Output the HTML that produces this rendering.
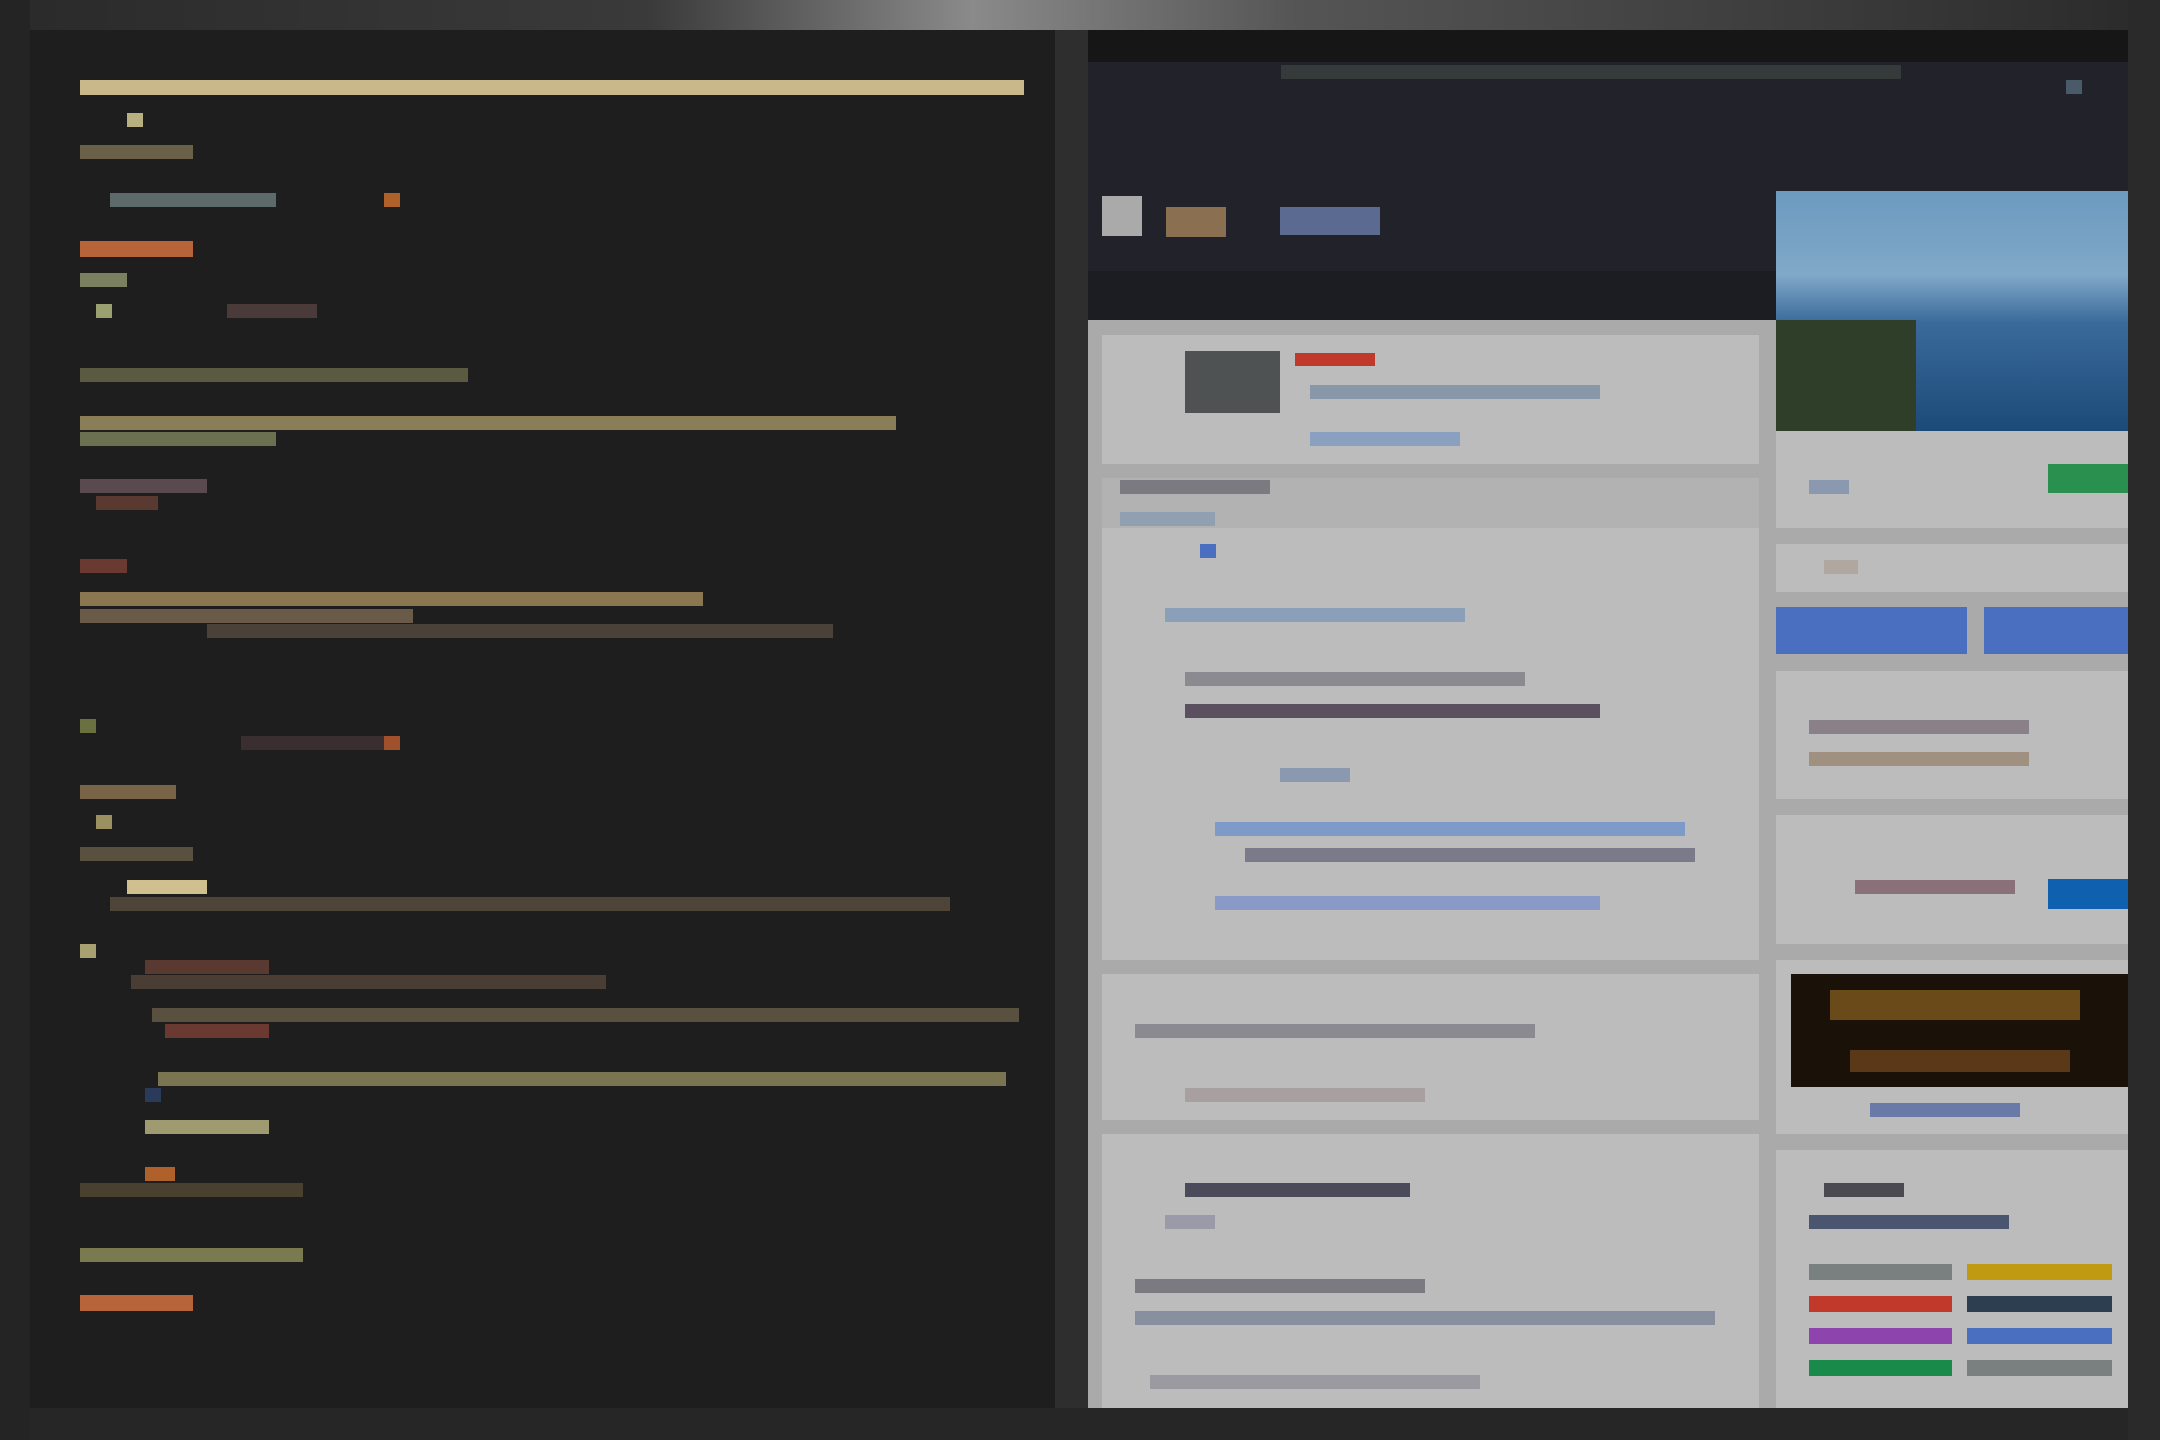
<!DOCTYPE html>
<html><head><meta charset="utf-8"><style>
html,body{margin:0;padding:0;width:2160px;height:1440px;overflow:hidden;background:#161616;font-family:"Liberation Sans",sans-serif}
.b{position:absolute}
</style></head><body>
<!-- noisy outer border -->
<div class="b" style="left:0;top:0;width:2160px;height:30px;background:linear-gradient(90deg,#2a2a2a,#3a3a3a 30%,#8a8a8a 45%,#555 60%,#2a2a2a)"></div>
<div class="b" style="left:0;top:1408px;width:2160px;height:32px;background:#262626"></div>
<div class="b" style="left:0;top:0;width:30px;height:1440px;background:#242424"></div>
<div class="b" style="left:2128px;top:0;width:32px;height:1440px;background:#2a2a2a"></div>
<div class="b" style="left:1055px;top:30px;width:33px;height:1378px;background:#2e2e2e"></div>

<!-- left editor panel -->
<div class="b" style="left:30px;top:30px;width:1025px;height:1378px;background:#1e1e1e"></div>
<div class="b" style="left:80px;top:80px;width:944px;height:15px;background:#c8b88a"></div>
<div class="b" style="left:127px;top:113px;width:16px;height:14px;background:#b8b080"></div>
<div class="b" style="left:80px;top:145px;width:113px;height:14px;background:#6a6048"></div>
<div class="b" style="left:110px;top:193px;width:166px;height:14px;background:#5d6a6a"></div>
<div class="b" style="left:384px;top:193px;width:16px;height:14px;background:#b0602a"></div>
<div class="b" style="left:80px;top:241px;width:113px;height:16px;background:#b8643a"></div>
<div class="b" style="left:80px;top:273px;width:47px;height:14px;background:#7a8060"></div>
<div class="b" style="left:96px;top:304px;width:16px;height:14px;background:#9aa070"></div>
<div class="b" style="left:227px;top:304px;width:90px;height:14px;background:#4a3a3a"></div>
<div class="b" style="left:80px;top:368px;width:388px;height:14px;background:#5a5a40"></div>
<div class="b" style="left:80px;top:416px;width:816px;height:14px;background:#8a7e58"></div>
<div class="b" style="left:80px;top:432px;width:196px;height:14px;background:#6a7050"></div>
<div class="b" style="left:80px;top:479px;width:127px;height:14px;background:#5a4a50"></div>
<div class="b" style="left:96px;top:496px;width:62px;height:14px;background:#5a3a30"></div>
<div class="b" style="left:80px;top:559px;width:47px;height:14px;background:#6a3a30"></div>
<div class="b" style="left:80px;top:592px;width:623px;height:14px;background:#8a7650"></div>
<div class="b" style="left:80px;top:609px;width:333px;height:14px;background:#6a5a48"></div>
<div class="b" style="left:207px;top:624px;width:626px;height:14px;background:#4a4238"></div>
<div class="b" style="left:80px;top:719px;width:16px;height:14px;background:#6a7040"></div>
<div class="b" style="left:241px;top:736px;width:159px;height:14px;background:#3a2e2e"></div>
<div class="b" style="left:384px;top:736px;width:16px;height:14px;background:#a0502a"></div>
<div class="b" style="left:80px;top:785px;width:96px;height:14px;background:#7a6448"></div>
<div class="b" style="left:96px;top:815px;width:16px;height:14px;background:#9a9060"></div>
<div class="b" style="left:80px;top:847px;width:113px;height:14px;background:#5a5040"></div>
<div class="b" style="left:127px;top:880px;width:80px;height:14px;background:#d0c090"></div>
<div class="b" style="left:110px;top:897px;width:840px;height:14px;background:#4e4438"></div>
<div class="b" style="left:80px;top:944px;width:16px;height:14px;background:#a8a070"></div>
<div class="b" style="left:145px;top:960px;width:124px;height:14px;background:#5a3a30"></div>
<div class="b" style="left:131px;top:975px;width:475px;height:14px;background:#4a3e34"></div>
<div class="b" style="left:152px;top:1008px;width:867px;height:14px;background:#5a5040"></div>
<div class="b" style="left:165px;top:1024px;width:104px;height:14px;background:#6a3a30"></div>
<div class="b" style="left:158px;top:1072px;width:848px;height:14px;background:#7a7450"></div>
<div class="b" style="left:145px;top:1088px;width:16px;height:14px;background:#2a3a5a"></div>
<div class="b" style="left:145px;top:1120px;width:124px;height:14px;background:#a09a70"></div>
<div class="b" style="left:145px;top:1167px;width:30px;height:14px;background:#b0602a"></div>
<div class="b" style="left:80px;top:1183px;width:223px;height:14px;background:#4a4030"></div>
<div class="b" style="left:80px;top:1248px;width:223px;height:14px;background:#7a7a50"></div>
<div class="b" style="left:80px;top:1295px;width:113px;height:16px;background:#b8643a"></div>

<!-- right browser panel -->
<div class="b" style="left:1088px;top:30px;width:1040px;height:32px;background:#161616"></div>
<div class="b" style="left:1088px;top:62px;width:1040px;height:209px;background:#22232a"></div>
<div class="b" style="left:1281px;top:65px;width:620px;height:14px;background:#353a3a"></div>
<div class="b" style="left:2066px;top:80px;width:16px;height:14px;background:#4a5a6a"></div>
<div class="b" style="left:1102px;top:196px;width:40px;height:40px;background:#aaaaaa"></div>
<div class="b" style="left:1166px;top:207px;width:60px;height:30px;background:#8a7050"></div>
<div class="b" style="left:1280px;top:207px;width:100px;height:28px;background:#5a6a90"></div>
<div class="b" style="left:1088px;top:271px;width:688px;height:49px;background:#1c1d22"></div>
<div class="b" style="left:1088px;top:320px;width:1040px;height:1088px;background:#aaaaaa"></div>

<!-- content cards -->
<div class="b" style="left:1102px;top:335px;width:657px;height:129px;background:#bcbcbc"></div>
<div class="b" style="left:1185px;top:351px;width:95px;height:62px;background:#4e5252"></div>
<div class="b" style="left:1295px;top:353px;width:80px;height:13px;background:#c0392b"></div>
<div class="b" style="left:1310px;top:385px;width:290px;height:14px;background:#8898a8"></div>
<div class="b" style="left:1310px;top:432px;width:150px;height:14px;background:#8aa0c0"></div>
<div class="b" style="left:1102px;top:478px;width:657px;height:50px;background:#b2b2b2"></div>
<div class="b" style="left:1120px;top:480px;width:150px;height:14px;background:#7a7a80"></div>
<div class="b" style="left:1120px;top:512px;width:95px;height:14px;background:#90a0b0"></div>
<div class="b" style="left:1102px;top:528px;width:657px;height:432px;background:#bcbcbc"></div>
<div class="b" style="left:1200px;top:544px;width:16px;height:14px;background:#4a6ec0"></div>
<div class="b" style="left:1165px;top:608px;width:300px;height:14px;background:#8aa0b8"></div>
<div class="b" style="left:1185px;top:672px;width:340px;height:14px;background:#8a8a90"></div>
<div class="b" style="left:1185px;top:704px;width:415px;height:14px;background:#5a5060"></div>
<div class="b" style="left:1280px;top:768px;width:70px;height:14px;background:#8a98b0"></div>
<div class="b" style="left:1215px;top:822px;width:470px;height:14px;background:#7e9ac8"></div>
<div class="b" style="left:1245px;top:848px;width:450px;height:14px;background:#7a7a8a"></div>
<div class="b" style="left:1215px;top:896px;width:385px;height:14px;background:#8a9ac8"></div>
<div class="b" style="left:1102px;top:974px;width:657px;height:146px;background:#bcbcbc"></div>
<div class="b" style="left:1135px;top:1024px;width:400px;height:14px;background:#8a8a90"></div>
<div class="b" style="left:1185px;top:1088px;width:240px;height:14px;background:#a8a0a0"></div>
<div class="b" style="left:1102px;top:1134px;width:657px;height:274px;background:#bcbcbc"></div>
<div class="b" style="left:1185px;top:1183px;width:225px;height:14px;background:#4a4a5a"></div>
<div class="b" style="left:1165px;top:1215px;width:50px;height:14px;background:#9a9aa8"></div>
<div class="b" style="left:1135px;top:1279px;width:290px;height:14px;background:#7a7a80"></div>
<div class="b" style="left:1135px;top:1311px;width:580px;height:14px;background:#8890a0"></div>
<div class="b" style="left:1150px;top:1375px;width:330px;height:14px;background:#9a9aa0"></div>

<!-- sidebar -->
<div class="b" style="left:1776px;top:191px;width:352px;height:240px;background:linear-gradient(180deg,#6c9ac0 0%,#80a8c8 35%,#3a6a9a 55%,#1c4a78 100%)"></div>
<div class="b" style="left:1776px;top:320px;width:140px;height:111px;background:#2e3e28"></div>
<div class="b" style="left:1776px;top:431px;width:352px;height:97px;background:#bcbcbc"></div>
<div class="b" style="left:1809px;top:480px;width:40px;height:14px;background:#8a98b0"></div>
<div class="b" style="left:2048px;top:464px;width:80px;height:29px;background:#2a9050"></div>
<div class="b" style="left:1776px;top:544px;width:352px;height:48px;background:#bcbcbc"></div>
<div class="b" style="left:1824px;top:560px;width:34px;height:14px;background:#b0a8a0"></div>
<div class="b" style="left:1776px;top:607px;width:191px;height:47px;background:#4a6ec0"></div>
<div class="b" style="left:1984px;top:607px;width:144px;height:47px;background:#4a6ec0"></div>
<div class="b" style="left:1776px;top:671px;width:352px;height:128px;background:#bcbcbc"></div>
<div class="b" style="left:1809px;top:720px;width:220px;height:14px;background:#8a8088"></div>
<div class="b" style="left:1809px;top:752px;width:220px;height:14px;background:#a09080"></div>
<div class="b" style="left:1776px;top:815px;width:352px;height:129px;background:#bcbcbc"></div>
<div class="b" style="left:1855px;top:880px;width:160px;height:14px;background:#8a7078"></div>
<div class="b" style="left:2048px;top:879px;width:80px;height:30px;background:#1060b0"></div>
<div class="b" style="left:1776px;top:960px;width:352px;height:174px;background:#bcbcbc"></div>
<div class="b" style="left:1791px;top:974px;width:337px;height:113px;background:#1a1208"></div>
<div class="b" style="left:1830px;top:990px;width:250px;height:30px;background:#6a4a18"></div>
<div class="b" style="left:1850px;top:1050px;width:220px;height:22px;background:#5a3818"></div>
<div class="b" style="left:1870px;top:1103px;width:150px;height:14px;background:#6a7aa8"></div>
<div class="b" style="left:1776px;top:1150px;width:352px;height:258px;background:#bcbcbc"></div>
<div class="b" style="left:1824px;top:1183px;width:80px;height:14px;background:#4a4a50"></div>
<div class="b" style="left:1809px;top:1215px;width:200px;height:14px;background:#4a5570"></div>
<div class="b" style="left:1809px;top:1264px;width:143px;height:16px;background:#7a8080"></div>
<div class="b" style="left:1967px;top:1264px;width:145px;height:16px;background:#c09a10"></div>
<div class="b" style="left:1809px;top:1296px;width:143px;height:16px;background:#c0392b"></div>
<div class="b" style="left:1967px;top:1296px;width:145px;height:16px;background:#2c3e50"></div>
<div class="b" style="left:1809px;top:1328px;width:143px;height:16px;background:#8e44ad"></div>
<div class="b" style="left:1967px;top:1328px;width:145px;height:16px;background:#4a6ec0"></div>
<div class="b" style="left:1809px;top:1360px;width:143px;height:16px;background:#1a8a4a"></div>
<div class="b" style="left:1967px;top:1360px;width:145px;height:16px;background:#7a8080"></div>
</body></html>
